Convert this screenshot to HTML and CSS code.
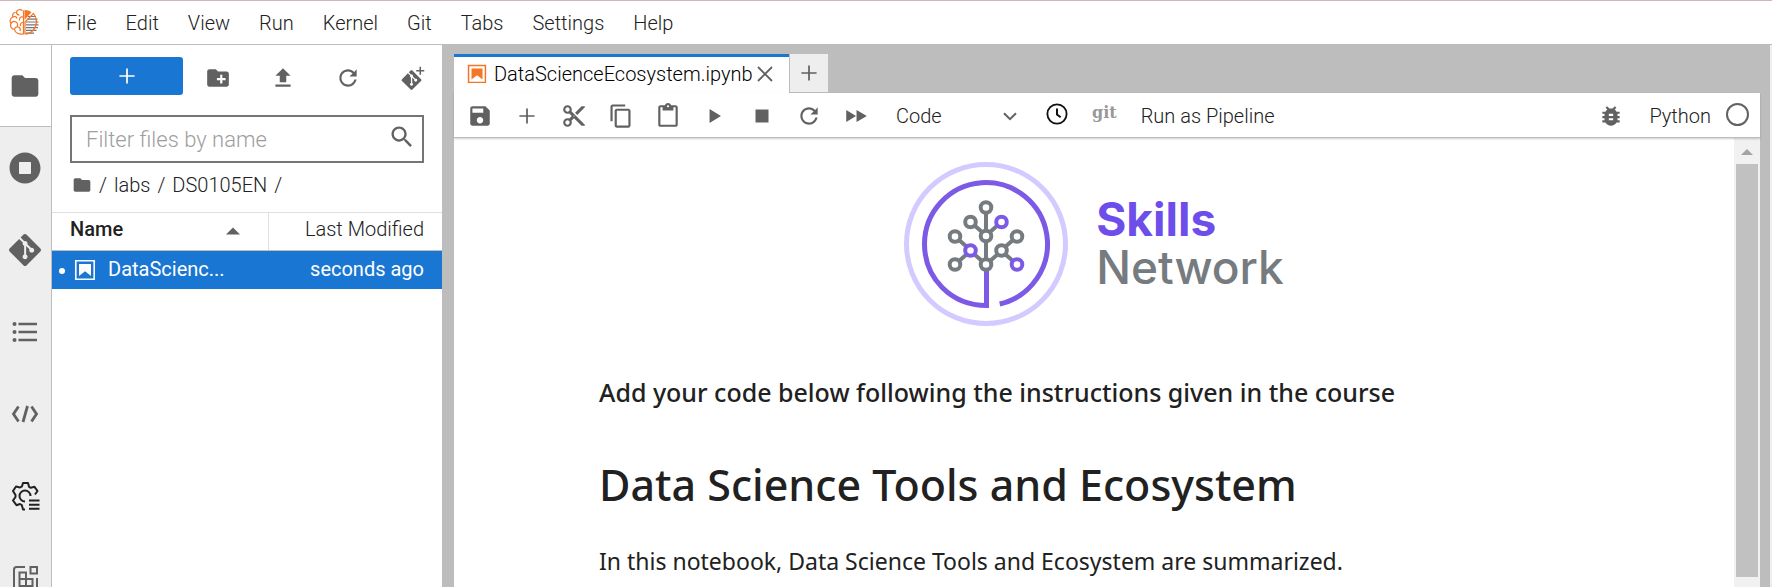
FILE: index.html
```html
<!DOCTYPE html>
<html lang="en">
<head>
<meta charset="utf-8">
<title>DataScienceEcosystem.ipynb</title>
<link rel="stylesheet" href="styles.css">
</head>
<body>
<div class="app">
  <header class="menubar">
    <svg class="brand" viewBox="0 0 30 27" aria-hidden="true">
      <path d="M19 7.500h8M18 10.200h10.500M17 13h12.500M17 15.800h12.500M17 18.600h12M17 21.400h10.500M17 24.200h8" stroke="#757575" stroke-width="1.200"/>
      <g fill="none" stroke="#f37626" stroke-width="1.200">
        <path d="M14.500 1.500v24M13.500 1.500C11-.2 8 .8 7.500 3 4.500 3 3 5.500 4 8 1 9 .300 12.500 2 14.500c-1.200 3 .5 5.500 3.500 6 .5 3.500 4.500 5 8.500 4.500"/>
        <path d="M7.500 3c0 2 1 3 3 3M4 8c1.500-1 3.500-.5 4 1.500M2 14.500c1-2 3-2.500 5-1.500s2 3.500 1 4.500M5.500 20.500c.2-2 2-3 4-2.500s2 2 1.500 4M14 8c-2.500-.5-4 1-3.500 3.500M14 13.500c-2 0-3 1.500-2.500 3.500"/>
        <path d="M16 13 24.500 4.500c4 5 4 12-.5 17-2.500 2.500-5 3.500-8 3.500z"/>
      </g>
      <path d="M15.500 1c3 0 5 .800 7 2.200l-7 7.800z" fill="#f37626"/>
    </svg>
    <nav class="menus">
      <button>File</button><button>Edit</button><button>View</button><button>Run</button><button>Kernel</button><button>Git</button><button>Tabs</button><button>Settings</button><button>Help</button>
    </nav>
  </header>

  <div class="workspace">
    <nav class="rail">
      <button class="rail-tab active" aria-label="File browser"><svg class="i32" viewBox="0 0 24 24"><path d="M10 4H4c-1.100 0-1.990.9-1.990 2L2 18c0 1.100.9 2 2 2h16c1.100 0 2-.9 2-2V8c0-1.100-.9-2-2-2h-8l-2-2z"/></svg></button>
      <button class="rail-tab" aria-label="Running terminals and kernels"><svg class="i32" viewBox="0 0 512 512"><path d="M256 8C119 8 8 119 8 256s111 248 248 248 248-111 248-248S393 8 256 8zm96 328c0 8.800-7.200 16-16 16H176c-8.800 0-16-7.200-16-16V176c0-8.800 7.200-16 16-16h160c8.800 0 16 7.200 16 16v160z"/></svg></button>
      <button class="rail-tab" aria-label="Git"><svg class="i32" viewBox="0 0 24 24"><use href="#git-mark"/></svg></button>
      <button class="rail-tab" aria-label="Table of contents"><svg class="i32" viewBox="0 0 32 32"><g><circle cx="5.500" cy="8" r="2"/><circle cx="5.500" cy="16" r="2"/><circle cx="5.500" cy="24" r="2"/><path d="M9.500 6.700H28v2.600H9.500zM9.500 14.700H28v2.600H9.500zM9.500 22.700H28v2.600H9.500z"/></g></svg></button>
      <button class="rail-tab" aria-label="Code snippets"><svg class="i32" viewBox="0 0 32 32"><path d="M9.500 8.500 4.500 16l5 7.500M22.500 8.500l5 7.500-5 7.500M18.500 8 14 24" fill="none" stroke="#616161" stroke-width="2.800"/></svg></button>
      <button class="rail-tab" aria-label="Runtimes"><svg class="i32" viewBox="0 0 32 32"><path d="M16 29.500h-2l-1.200-4.500-1.800-1-3.500 1.200L4 20.500 6.500 17v-2L4 11l3-4.500 4 1 2-1.200L14 3h5l1 3.800 1.800 1 3.700-1L28.500 11 26 14.500M16 21.500a5.500 5.500 0 1 1 5.500-5.500" fill="none" stroke="#212121" stroke-width="2" stroke-linejoin="round"/><path d="M20 20.500h10.500M20 24.700h10.500M20 28.700h10.500" stroke="#212121" stroke-width="2"/></svg></button>
      <button class="rail-tab" aria-label="Extensions"><svg class="i32" viewBox="0 0 32 32"><path d="M16 5H7.500Q5 5 5 7.500V28M28 16v12M10.500 28V10.500H17V17h6.500v7h-13M10.500 17H17v7M21.500 5H28v6.500h-6.500z" fill="none" stroke="#616161" stroke-width="2"/></svg></button>
    </nav>

    <aside class="browser">
      <div class="browser-tools">
        <button class="launch" aria-label="New launcher"><svg class="i26" viewBox="0 0 24 24"><use href="#plus"/></svg></button>
        <button class="tool" aria-label="New folder"><svg class="i26" viewBox="0 0 24 24"><path d="M20 6h-8l-2-2H4c-1.110 0-1.990.890-1.990 2L2 18c0 1.110.890 2 2 2h16c1.110 0 2-.890 2-2V8c0-1.110-.890-2-2-2zm-1 8h-3v3h-2v-3h-3v-2h3V9h2v3h3v2z"/></svg></button>
        <button class="tool" aria-label="Upload"><svg class="i26" viewBox="0 0 24 24"><path d="M5 20h14v-2H5v2zm0-10h4v6h6v-6h4l-7-7-7 7z"/></svg></button>
        <button class="tool" aria-label="Refresh"><svg class="i26" viewBox="0 0 18 18"><use href="#refresh"/></svg></button>
        <button class="tool" aria-label="Git clone"><svg class="i26" viewBox="0 0 24 24"><g transform="translate(1.500 4.800) scale(.76)"><use href="#git-mark"/></g><path d="M18 1.500h1.400v3h3v1.400h-3v3H18v-3h-3V4.500h3z"/></svg></button>
      </div>
      <label class="filter">
        <input type="text" placeholder="Filter files by name" aria-label="Filter files by name">
        <svg class="i28" viewBox="0 0 24 24"><path d="M15.500 14h-.790l-.280-.270C15.410 12.590 16 11.110 16 9.500 16 5.910 13.090 3 9.500 3S3 5.910 3 9.500 5.910 16 9.500 16c1.610 0 3.090-.590 4.230-1.570l.270.280v.790l5 4.990L20.490 19l-4.990-5zm-6 0C7.010 14 5 11.990 5 9.500S7.010 5 9.500 5 14 7.010 14 9.500 11.990 14 9.500 14z"/></svg>
      </label>
      <div class="crumbs">
        <svg class="i20" viewBox="0 0 24 24"><path d="M10 4H4c-1.100 0-1.990.9-1.990 2L2 18c0 1.100.9 2 2 2h16c1.100 0 2-.9 2-2V8c0-1.100-.9-2-2-2h-8l-2-2z"/></svg>
        <span>/</span><a href="#labs">labs</a><span>/</span><a href="#ds">DS0105EN</a><span>/</span>
      </div>
      <table class="files">
        <thead><tr>
          <th class="name"><div class="name-head">Name<svg class="sort" viewBox="0 0 14 8"><path d="M0 7.500 7 .5l7 7z"/></svg></div></th>
          <th class="modified">Last Modified</th>
        </tr></thead>
        <tbody><tr>
          <td><div class="file"><span class="dot"></span><svg class="i24" viewBox="0 0 22 22"><use href="#notebook"/></svg><span>DataScienc...</span></div></td>
          <td class="modified">seconds ago</td>
        </tr></tbody>
      </table>
    </aside>

    <main class="dock">
      <div class="tabs">
        <div class="tab"><svg class="i22" viewBox="0 0 22 22"><use href="#notebook"/></svg><span class="tab-label">DataScienceEcosystem.ipynb</span><button class="close" aria-label="Close tab"><svg viewBox="0 0 16 16"><path d="M1 1l14 14M15 1 1 15" stroke="#616161" stroke-width="1.800"/></svg></button></div>
        <button class="new-tab" aria-label="New tab"><svg class="i26" viewBox="0 0 24 24"><use href="#plus"/></svg></button>
      </div>
      <div class="panel">
        <div class="toolbar">
          <button class="act" aria-label="Save"><svg class="i26" viewBox="0 0 24 24"><path d="M17 3H5c-1.110 0-2 .9-2 2v14c0 1.100.890 2 2 2h14c1.100 0 2-.9 2-2V7l-4-4zm-5 16c-1.660 0-3-1.340-3-3s1.340-3 3-3 3 1.340 3 3-1.340 3-3 3zm3-10H5V5h10v4z"/></svg></button>
          <button class="act" aria-label="Insert cell"><svg class="i26" viewBox="0 0 24 24"><use href="#plus"/></svg></button>
          <button class="act" aria-label="Cut"><svg class="i26" viewBox="0 0 24 24"><path d="M9.640 7.640c.230-.5.360-1.050.360-1.640 0-2.210-1.790-4-4-4S2 3.790 2 6s1.790 4 4 4c.590 0 1.140-.130 1.640-.360L10 12l-2.360 2.360C7.140 14.130 6.590 14 6 14c-2.210 0-4 1.790-4 4s1.790 4 4 4 4-1.790 4-4c0-.590-.130-1.140-.360-1.640L12 14l7 7h3v-1L9.640 7.640zM6 8c-1.100 0-2-.890-2-2s.9-2 2-2 2 .890 2 2-.9 2-2 2zm0 12c-1.100 0-2-.890-2-2s.9-2 2-2 2 .890 2 2-.9 2-2 2zm6-7.500c-.280 0-.5-.220-.5-.5s.220-.5.5-.5.5.220.5.5-.220.5-.5.5zM19 3l-6 6 2 2 7-7V3z"/></svg></button>
          <button class="act" aria-label="Copy"><svg class="i26" viewBox="0 0 18 18"><path d="M11.900 1H3.200C2.400 1 1.700 1.700 1.700 2.500v10.200h1.500V2.500h8.700V1zM14.100 3.900h-8c-.8 0-1.500.7-1.500 1.500v10.200c0 .8.7 1.500 1.500 1.500h8c.8 0 1.500-.7 1.500-1.500V5.400c0-.8-.7-1.500-1.500-1.500zm0 11.600h-8V5.400h8v10.100z"/></svg></button>
          <button class="act" aria-label="Paste"><svg class="i26" viewBox="0 0 24 24"><path d="M19 2h-4.180C14.400.840 13.300 0 12 0c-1.300 0-2.400.840-2.820 2H5c-1.100 0-2 .9-2 2v16c0 1.100.9 2 2 2h14c1.100 0 2-.9 2-2V4c0-1.100-.9-2-2-2zm-7 0c.550 0 1 .450 1 1s-.450 1-1 1-1-.450-1-1 .450-1 1-1zm7 18H5V4h2v3h10V4h2v16z"/></svg></button>
          <button class="act" aria-label="Run"><svg class="i26" viewBox="0 0 24 24"><path d="M7 5.500v13l10.500-6.500z"/></svg></button>
          <button class="act" aria-label="Stop"><svg class="i26" viewBox="0 0 24 24"><path d="M6 6h12v12H6z"/></svg></button>
          <button class="act" aria-label="Restart"><svg class="i26" viewBox="0 0 18 18"><use href="#refresh"/></svg></button>
          <button class="act" aria-label="Run all"><svg class="i26" viewBox="0 0 24 24"><path d="M3 17.500 12 12 3 6.500v11zM12.500 6.500v11L22 12z"/></svg></button>
          <label class="cell-type">
            <select aria-label="Cell type"><option>Code</option></select>
            <svg viewBox="0 0 14 9"><path d="M1 1.200l6 6 6-6" fill="none" stroke="#616161" stroke-width="2"/></svg>
          </label>
          <button class="clock" aria-label="Checkpoint"><svg viewBox="0 0 24 24"><path d="M12 6v6.500l4 3" fill="none" stroke="#111" stroke-width="2.200"/><circle cx="12" cy="12" r="10.500" fill="none" stroke="#111" stroke-width="2"/></svg></button>
          <button class="git">git</button>
          <button class="pipeline">Run as Pipeline</button>
          <span class="spring"></span>
          <button class="bug" aria-label="Debugger"><svg class="i26" viewBox="0 0 24 24"><path d="M20 8h-2.810c-.450-.780-1.070-1.450-1.820-1.960L17 4.410 15.590 3l-2.170 2.170C12.960 5.060 12.490 5 12 5c-.490 0-.960.060-1.410.170L8.410 3 7 4.410l1.620 1.630C7.880 6.550 7.260 7.220 6.810 8H4v2h2.090c-.050.330-.090.660-.090 1v1H4v2h2v1c0 .340.040.670.090 1H4v2h2.810c1.040 1.790 2.970 3 5.190 3s4.150-1.210 5.190-3H20v-2h-2.090c.050-.330.090-.660.090-1v-1h2v-2h-2v-1c0-.340-.040-.670-.090-1H20V8zm-6 8h-4v-2h4v2zm0-4h-4v-2h4v2z"/></svg></button>
          <button class="kernel">Python</button>
          <span class="idle"></span>
        </div>
        <div class="body">
          <article class="notebook">
            <div class="logo">
              <svg viewBox="0 0 164 164" aria-hidden="true">
                <g fill="none">
                  <circle cx="82" cy="82" r="79.500" stroke="#d4caff" stroke-width="5"/>
                  <path d="M82.500 109v34.500C47 143.500 20.500 116 20.500 82a61.500 61.500 0 1 1 75.200 60" stroke="#7c5ae6" stroke-width="5"/>
                  <g stroke="#757b7e" stroke-width="4">
                    <path d="M82 51v17M82 79v17M70 63l8 7M94 63l-8 7M55 78l8 7M70 92l8 7M94 92l-8 7M109 78l-8 7M55 99l8-7M109 99l-8-7"/>
                    <circle cx="82" cy="45.500" r="5.300"/><circle cx="66.500" cy="60" r="5.300"/><circle cx="82" cy="74" r="5.300"/><circle cx="51" cy="74.500" r="5.300"/><circle cx="113" cy="74.500" r="5.300"/><circle cx="97.500" cy="88.500" r="5.300"/><circle cx="51" cy="102.500" r="5.300"/><circle cx="82" cy="102.500" r="5.300"/>
                  </g>
                  <g stroke="#7c5ae6" stroke-width="4"><circle cx="97.500" cy="60" r="5.300"/><circle cx="66.500" cy="88.500" r="5.300"/><circle cx="113" cy="102.500" r="5.300"/></g>
                </g>
              </svg>
              <div class="wordmark"><strong>Skills</strong><span>Network</span></div>
            </div>
            <h3>Add your code below following the instructions given in the course</h3>
            <h1>Data Science Tools and Ecosystem</h1>
            <p>In this notebook, Data Science Tools and Ecosystem are summarized.</p>
          </article>
          <div class="scrollbar"><svg viewBox="0 0 12 6"><path d="M0 6 6 0l6 6z"/></svg><div class="thumb"></div></div>
        </div>
      </div>
    </main>
    <div class="right-rail"></div>
  </div>
</div>

<svg class="defs" aria-hidden="true"><defs>
  <path id="plus" d="M19 12.800h-6.200V19h-1.600v-6.200H5v-1.600h6.200V5h1.600v6.200H19z"/>
  <path id="refresh" d="M9 13.500c-2.490 0-4.500-2.010-4.500-4.500S6.510 4.500 9 4.500c1.240 0 2.360.520 3.170 1.330L10 8h5V3l-1.760 1.760C12.150 3.680 10.660 3 9 3 5.690 3 3.010 5.690 3.010 9S5.690 15 9 15c2.970 0 5.430-2.160 5.900-5h-1.520c-.460 2-2.240 3.500-4.380 3.500z"/>
  <path id="git-mark" d="M23.546 10.930L13.067.452c-.604-.603-1.582-.603-2.188 0L8.708 2.627l2.760 2.760c.645-.215 1.379-.070 1.889.441.516.515.658 1.258.438 1.900l2.658 2.660c.645-.223 1.387-.078 1.900.435.721.720.721 1.884 0 2.604-.719.719-1.881.719-2.600 0-.539-.541-.674-1.337-.404-1.996L12.860 8.955v6.525c.176.086.342.203.488.348.713.721.713 1.883 0 2.600-.719.721-1.889.721-2.609 0-.719-.719-.719-1.879 0-2.598.182-.180.387-.316.605-.406V8.835c-.217-.091-.424-.222-.600-.401-.545-.545-.676-1.342-.396-2.009L7.636 3.700.450 10.881c-.600.605-.600 1.584 0 2.189l10.480 10.477c.604.604 1.582.604 2.186 0l10.430-10.430c.605-.603.605-1.582 0-2.187"/>
  <g id="notebook"><path d="M18.700 3.300v15.400H3.300V3.300h15.400m1.500-1.500H1.800v18.300h18.300l.1-18.300z"/><path d="M16.500 16.500l-5.400-4.300-5.600 4.300v-11h11z"/></g>
</defs></svg>
</body>
</html>
```

FILE: styles.css
```css
* { box-sizing: border-box; }

html, body { height: 100%; }

body {
  margin: 0;
  overflow: hidden;
  background: #fff;
  color: #212121;
  font: 300 20px/24px Roboto, "Liberation Sans", sans-serif;
}

button {
  display: flex;
  align-items: center;
  justify-content: center;
  margin: 0;
  padding: 0;
  border: 0;
  background: none;
  color: inherit;
  font: inherit;
  white-space: nowrap;
}

svg { display: block; flex: none; fill: #616161; }
.defs { position: absolute; width: 0; height: 0; }
.i20 { width: 20px; height: 20px; }
.i22 { width: 22px; height: 22px; }
.i24 { width: 24px; height: 24px; }
.i26 { width: 26px; height: 26px; }
.i28 { width: 28px; height: 28px; }
.i32 { width: 32px; height: 32px; }

.app { display: flex; flex-direction: column; height: 100vh; }

/* Menu bar */
.menubar {
  display: flex;
  flex: none;
  align-items: center;
  height: 45px;
  padding-left: 9px;
  border-top: 1px solid #cdb6bd;
  border-bottom: 1px solid #bdbdbd;
}
.brand { width: 30px; height: 27px; }
.menus { display: flex; gap: 29px; padding-left: 27px; }

.workspace { display: flex; flex: 1; min-height: 0; background: #bdbdbd; }

/* Activity rail */
.rail {
  flex: none;
  width: 52px;
  overflow: hidden;
  border-right: 1px solid #bdbdbd;
  background: #eee;
}
.rail-tab { width: 50px; height: 82px; }
.rail-tab.active {
  width: 52px;
  padding-right: 2px;
  border-bottom: 1px solid #bdbdbd;
  background: #fff;
}

/* File browser */
.browser { flex: none; width: 390px; background: #fff; }
.browser-tools { display: flex; padding: 12px 0 0 18px; }
.launch {
  flex: none;
  width: 113px;
  height: 38px;
  margin-right: 2px;
  border-radius: 3px;
  background: #1976d2;
}
.launch svg { fill: #fff; }
.tool { flex: none; width: 65px; height: 42px; }
.filter {
  display: flex;
  align-items: center;
  height: 48px;
  margin: 16px 18px 0;
  padding: 0 6px 4px 14px;
  border: 2px solid #757575;
}
.filter input {
  flex: 1;
  min-width: 0;
  padding: 6px 0 0;
  border: 0;
  outline: 0;
  background: none;
  font: inherit;
  font-size: 22px;
}
.filter input::placeholder { color: #9e9e9e; opacity: 1; }
.crumbs {
  display: flex;
  align-items: center;
  gap: 7px;
  height: 49px;
  padding: 0 0 5px 20px;
}
.crumbs a { color: inherit; text-decoration: none; }

.files { width: 100%; border-collapse: collapse; }
.files th, .files td { height: 38px; padding: 0 0 2px; text-align: left; }
.files th { padding-bottom: 5px; border-top: 1px solid #e0e0e0; border-bottom: 1px solid #bdbdbd; font-weight: 300; }
.files th.name { width: 216px; border-right: 1px solid #e0e0e0; font-weight: 500; }
.files .modified { padding-right: 18px; text-align: right; }
.name-head { display: flex; align-items: center; justify-content: space-between; padding: 0 28px 0 18px; }
.sort { width: 14px; height: 8px; margin-top: 4px; }
.files tbody { background: #1976d2; color: #fff; font-weight: 400; }
.files tbody svg { fill: #fff; }
.file { display: flex; align-items: center; padding-left: 7px; }
.file svg { margin: 2px 11px 0 8px; }
.dot { width: 6px; height: 6px; margin-top: 4px; border-radius: 50%; background: #fff; }

/* Dock */
.dock { display: flex; flex: 1; flex-direction: column; min-width: 0; padding: 9px 10px 0 12px; }
.tabs { display: flex; flex: none; height: 39px; }
.tab {
  display: flex;
  align-items: center;
  width: 335px;
  padding: 0 16px 2px 12px;
  border-top: 3px solid #1976d2;
  background: #fff;
  color: #000;
}
.tab svg { fill: #f37626; }
.tab-label { flex: 1; min-width: 0; margin: 0 2px 0 6px; overflow: hidden; white-space: nowrap; }
.close svg { width: 16px; height: 16px; }
.new-tab { width: 39px; border: 1px solid #bdbdbd; border-width: 0 0 1px 1px; background: #eee; }
.panel { display: flex; flex: 1; flex-direction: column; min-height: 0; background: #fff; }
.toolbar {
  z-index: 1;
  display: flex;
  flex: none;
  align-items: center;
  height: 45px;
  padding: 2px 11px 0 2px;
  border-bottom: 1px solid #bdbdbd;
  box-shadow: 0 1px 2px rgba(0, 0, 0, .2);
}
.act { width: 47px; height: 42px; }
.cell-type { display: flex; align-items: center; width: 138px; margin-left: 17px; }
.cell-type select {
  flex: 1;
  padding: 0;
  border: 0;
  appearance: none;
  background: none;
  color: inherit;
  font: inherit;
}
.cell-type svg { width: 14px; height: 9px; margin-right: 17px; }
.clock { margin: 0 24px 5px 12px; }
.clock svg { width: 22px; height: 22px; }
.git { padding-bottom: 6px; color: #999; font: 700 16px/20px "DejaVu Serif", serif; }
.pipeline { margin-left: 24px; }
.spring { flex: 1; }
.kernel { margin: 0 15px 0 25px; }
.idle { width: 23px; height: 23px; margin-bottom: 4px; border: 2px solid #616161; border-radius: 50%; }

.body { display: flex; flex: 1; min-height: 0; }
.notebook {
  flex: 1;
  min-width: 0;
  overflow: hidden;
  padding: 24px 145px 0;
  font-family: "Noto Sans", "Open Sans", sans-serif;
}
.logo { display: flex; align-items: center; justify-content: center; gap: 28px; }
.logo svg { width: 164px; height: 164px; }
.wordmark {
  display: flex;
  flex-direction: column;
  padding-bottom: 2px;
  color: #757b7e;
  font: 500 46px/48px Inter, sans-serif;
}
.wordmark strong { color: #6e4eea; font-weight: 700; }
h1, h3, p { margin: 0; }
.notebook h3 { margin-top: 50px; font-size: 25px; line-height: 32px; font-weight: 500; }
.notebook h1 { margin-top: 47px; font-size: 43px; line-height: 60px; font-weight: 500; }
.notebook p { margin-top: 30px; font-size: 23px; line-height: 32px; font-weight: 400; }

.scrollbar {
  display: flex;
  flex: none;
  flex-direction: column;
  align-items: center;
  width: 26px;
  padding: 11px 2px 10px;
  background: #f1f1f1;
}
.scrollbar svg { width: 12px; height: 6px; fill: #a3a3a3; }
.thumb { flex: 1; align-self: stretch; margin-top: 9px; background: #c1c1c1; }
.right-rail { flex: none; width: 2px; background: #eee; }
```
